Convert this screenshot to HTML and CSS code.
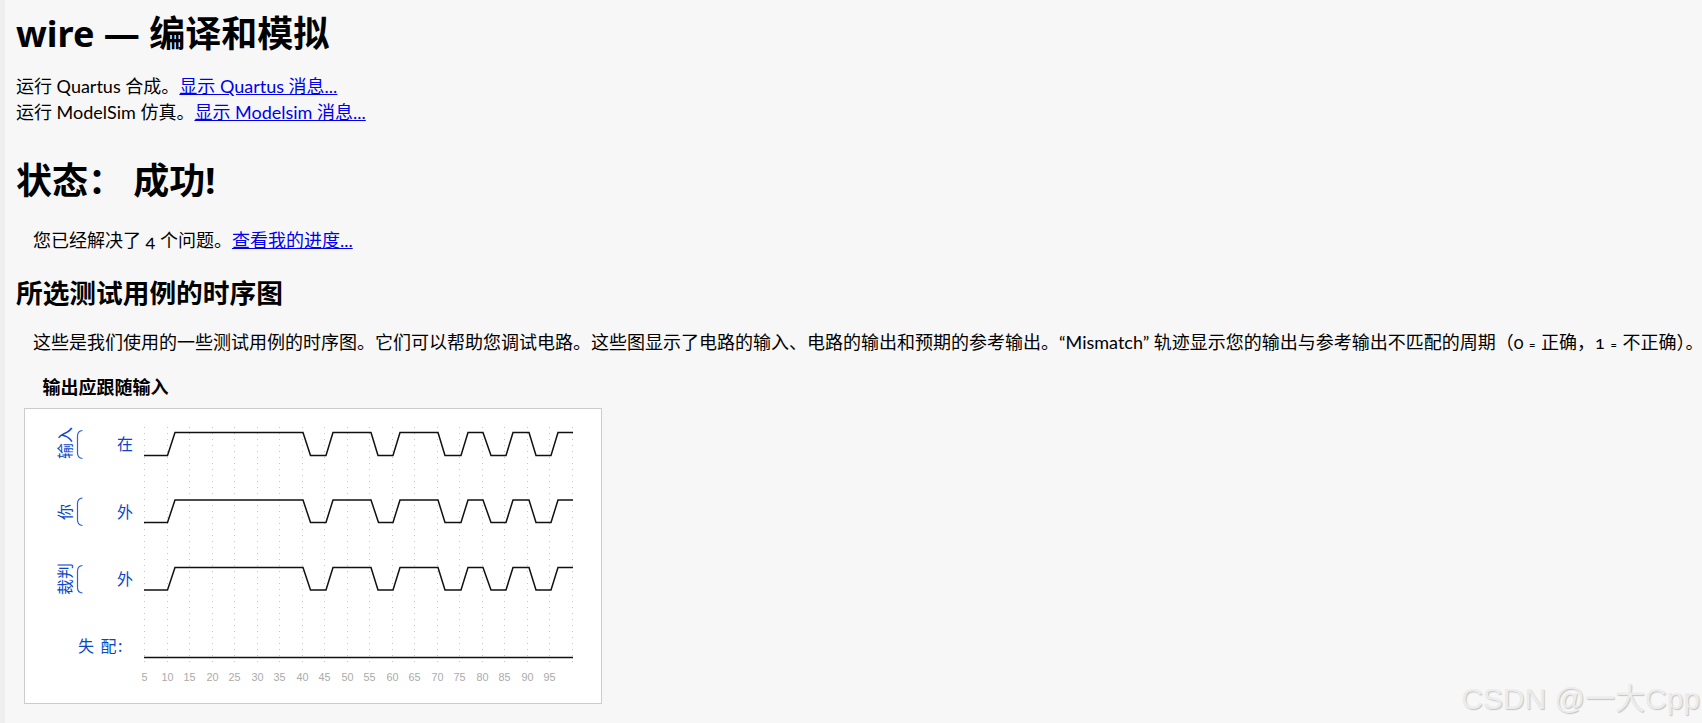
FILE: index.html
```html
<!DOCTYPE html>
<html lang="zh">
<head>
<meta charset="utf-8">
<title>wire — 编译和模拟</title>
<link rel="stylesheet" href="styles.css">
</head>
<body>
<main class="page">
  <h1 class="title">wire — 编译和模拟</h1>
  <p class="log">运行 Quartus 合成。<a href="#">显示 Quartus 消息...</a><br>运行 ModelSim 仿真。<a href="#">显示 Modelsim 消息...</a></p>
  <h1 class="status">状态： 成功!</h1>
  <p class="indent solved">您已经解决了 <span class="num">4</span> 个问题。<a href="#">查看我的进度...</a></p>
  <h2 class="section">所选测试用例的时序图</h2>
  <p class="indent intro">这些是我们使用的一些测试用例的时序图。它们可以帮助您调试电路。这些图显示了电路的输入、电路的输出和预期的参考输出。“Mismatch” 轨迹显示您的输出与参考输出不匹配的周期（<span class="num">0</span> <span class="eq">=</span> 正确，<span class="num">1</span> <span class="eq">=</span> 不正确）。</p>
  <div class="caption">输出应跟随输入</div>
  <div class="frame">
    <svg class="wave" width="576" height="294" viewBox="25 409 576 294">
      <path class="grid" d="M144.5 427V662M167.5 427V662M189.5 427V662M212.5 427V662M234.5 427V662M257.5 427V662M279.5 427V662M302.5 427V662M324.5 427V662M347.5 427V662M369.5 427V662M392.5 427V662M414.5 427V662M437.5 427V662M459.5 427V662M482.5 427V662M504.5 427V662M527.5 427V662M549.5 427V662M572.5 427V662"/>
      <path class="sig" d="M144 455.5H167.5L175 432.5H303L310.5 455.5H326L333 432.5H371L378 455.5H393L400 432.5H438L445 455.5H461L468 432.5H483L491 455.5H506L513 432.5H529L536 455.5H551L558 432.5H573"/>
      <path class="sig" d="M144 522.5H167.5L175 500H303L310.5 522.5H326L333 500H371L378.5 522.5H393L400 500H438L445 522.5H461L468 500H483L491 522.5H506L513 500H529L536 522.5H551L558 500H573"/>
      <path class="sig" d="M144 590H167.5L175 567.5H303L310.5 590H326L333 567.5H371L378 590H393L400 567.5H438L445 590H461L468 567.5H483L491 590H506L513 567.5H529L536 590H551L558 567.5H573"/>
      <path class="sig" d="M144 657.5H573"/>
      <path class="brace" d="M82.5 430.5Q77.5 431 77.5 436V453Q77.5 458 82.5 458.5M82.5 498Q77.5 498.5 77.5 503.5V520Q77.5 525 82.5 525.5M82.5 565.5Q77.5 566 77.5 571V588Q77.5 592.5 82.5 593"/>
      <text class="label" transform="translate(71 443) rotate(-90)" text-anchor="middle">输入</text>
      <text class="label" transform="translate(71 512) rotate(-90)" text-anchor="middle">你</text>
      <text class="label" transform="translate(71 579) rotate(-90)" text-anchor="middle">裁判</text>
      <text class="label" x="125" y="450" text-anchor="middle">在</text>
      <text class="label" x="125" y="517.5" text-anchor="middle">外</text>
      <text class="label" x="125" y="585" text-anchor="middle">外</text>
      <text class="label mis" x="124" y="652" text-anchor="end">失 配:</text>
      <g class="ticks" text-anchor="middle">
        <text x="144.5" y="680.5">5</text><text x="167.5" y="680.5">10</text><text x="189.5" y="680.5">15</text><text x="212.5" y="680.5">20</text><text x="234.5" y="680.5">25</text><text x="257.5" y="680.5">30</text><text x="279.5" y="680.5">35</text><text x="302.5" y="680.5">40</text><text x="324.5" y="680.5">45</text><text x="347.5" y="680.5">50</text><text x="369.5" y="680.5">55</text><text x="392.5" y="680.5">60</text><text x="414.5" y="680.5">65</text><text x="437.5" y="680.5">70</text><text x="459.5" y="680.5">75</text><text x="482.5" y="680.5">80</text><text x="504.5" y="680.5">85</text><text x="527.5" y="680.5">90</text><text x="549.5" y="680.5">95</text>
      </g>
    </svg>
  </div>
</main>
<div class="watermark">CSDN @一大Cpp</div>
</body>
</html>
```
FILE: styles.css
```css
html, body { margin: 0; padding: 0; height: 100%; }
body {
  background: #f7f7f7;
  color: #000;
  font-family: "Lato", "Noto Sans CJK SC", sans-serif;
  font-size: 18px;
  overflow: hidden;
}
.page {
  border-left: 5px solid #efefef;
  padding: 0 0 0 11px;
  height: 100%;
  box-sizing: border-box;
  white-space: nowrap;
}
.title, .status {
  font-family: "Noto Sans", "Noto Sans CJK SC", sans-serif;
  font-size: 36px;
  font-weight: 700;
  margin: 0;
  line-height: 46px;
}
.title { padding-top: 11px; }
.log { margin: 16px 0 0; line-height: 26px; }
.status { margin-top: 33px; }
.indent { margin-left: 17px; }
.solved { margin-top: 23px; margin-bottom: 0; line-height: 26px; }
.num { font-size: 18px; line-height: 1; font-variant-numeric: oldstyle-nums; }
.eq { font-size: 11px; line-height: 1; margin: 0 1px; }
.section {
  font-family: "Noto Sans", "Noto Sans CJK SC", sans-serif;
  font-size: 26.7px;
  font-weight: 700;
  margin: 22px 0 0;
  line-height: 36px;
}
.intro { margin-top: 18px; margin-bottom: 0; line-height: 26px; }
.caption {
  font-family: "Noto Sans", "Noto Sans CJK SC", sans-serif;
  font-size: 18px;
  font-weight: 700;
  margin: 21px 0 0 26.5px;
  line-height: 22px;
}
.frame {
  width: 576px;
  height: 294px;
  margin: 10px 0 0 8px;
  border: 1px solid #ccc;
  background: #fff;
}
.wave { display: block; }
.grid { fill: none; stroke: #c4c4c4; stroke-width: 1; stroke-dasharray: 1 5; }
.sig { fill: none; stroke: #111; stroke-width: 1.5; }
.brace { fill: none; stroke: #2f5fd0; stroke-width: 1.2; }
.label {
  font-family: "Noto Sans CJK SC", sans-serif;
  font-size: 16px;
  fill: #0b46c8;
}
.mis { letter-spacing: 1.5px; }
.ticks {
  font-family: "Liberation Sans", sans-serif;
  font-size: 10.8px;
  fill: #aaa;
}
a { color: #00e; }
.watermark {
  position: absolute;
  right: 2px;
  bottom: 6px;
  font-family: "Liberation Sans", "Noto Sans CJK SC", sans-serif;
  font-size: 30px;
  line-height: 36px;
  color: #ececec;
  text-shadow: 1px 1px 1px #c4c4c4;
}
```
